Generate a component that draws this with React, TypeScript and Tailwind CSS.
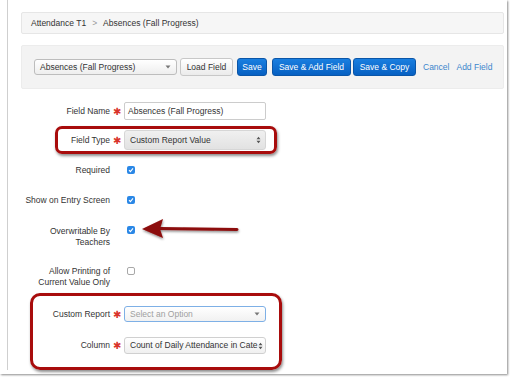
import React from "react";

const Star = () => (
  <div className="w-[14px] shrink-0 text-center text-[10px] leading-[11px] text-[#d9342b]">✱</div>
);

const Check = ({ on }: { on?: boolean }) =>
  on ? (
    <span className="flex h-[8px] w-[8px] items-center justify-center rounded-[2px] bg-[#2a87e6]">
      <svg width="6" height="6" viewBox="0 0 6 6">
        <path d="M1 3.2 L2.4 4.6 L5 1.4" stroke="white" strokeWidth="1.1" fill="none" />
      </svg>
    </span>
  ) : (
    <span className="block h-[8px] w-[8px] rounded-[2px] border border-[#a8a8a8] bg-white" />
  );

const UpDown = () => (
  <svg width="5" height="8" viewBox="0 0 5 8" className="shrink-0">
    <path d="M0.5 3.2 L2.5 0.8 L4.5 3.2 Z M0.5 4.8 L2.5 7.2 L4.5 4.8 Z" fill="#555" />
  </svg>
);

const Caret = () => (
  <svg width="6" height="4" viewBox="0 0 6 4" className="shrink-0">
    <path d="M0.5 0.5 L5.5 0.5 L3 3.5 Z" fill="#777" />
  </svg>
);

function Row({
  label,
  lines,
  star,
  children,
  className,
}: {
  label?: string;
  lines?: string[];
  star?: boolean;
  children: React.ReactNode;
  className: string;
}) {
  return (
    <div className={`flex ${className}`}>
      <div className="w-[103px] shrink-0 text-right leading-[11px]">
        {lines ? lines.map((l) => <div key={l}>{l}</div>) : label}
      </div>
      {star ? <Star /> : <div className="w-[14px] shrink-0" />}
      {children}
    </div>
  );
}

export default function App() {
  return (
    <div className="relative h-[380px] w-[511px] overflow-hidden bg-white font-['Liberation_Sans',Arial,sans-serif] text-[8.5px] text-[#333]">
      <div className="h-[374px] w-[507px] bg-white pl-[7px] shadow-[1px_1px_2px_rgba(0,0,0,0.45)]">
        <div className="h-[370px] border-l border-[#cfcfcf] pt-[12px] pr-[3px]">
          {/* breadcrumb */}
          <div className="ml-[13px] flex h-[22px] items-center gap-[6px] rounded-[2px] border border-[#e6e6e6] bg-[#f6f6f6] pl-[9px]">
            <span>Attendance T1</span>
            <span className="text-[#999]">&gt;</span>
            <span>Absences (Fall Progress)</span>
          </div>

          {/* toolbar */}
          <div className="ml-[13px] mt-[11px] flex h-[44px] items-center rounded-[2px] border border-[#ececec] bg-[#f3f3f3] pl-[12px]">
            <div className="flex h-[16px] w-[143px] items-center justify-between rounded-[3px] border border-[#bdbdbd] bg-gradient-to-b from-white to-[#eeeeee] pl-[5px] pr-[5px]">
              <span>Absences (Fall Progress)</span>
              <Caret />
            </div>
            <div className="ml-[3px] flex h-[18px] w-[53px] items-center justify-center rounded-[3px] border border-[#c8c8c8] bg-gradient-to-b from-white to-[#ebebeb]">
              Load Field
            </div>
            <div className="ml-[4px] flex h-[18px] w-[30px] items-center justify-center rounded-[3px] border border-[#0b56a8] bg-gradient-to-b from-[#1a7fe0] to-[#0760c2] text-white">
              Save
            </div>
            <div className="ml-[5px] flex h-[18px] w-[79px] items-center justify-center rounded-[3px] border border-[#0b56a8] bg-gradient-to-b from-[#1a7fe0] to-[#0760c2] text-white">
              Save &amp; Add Field
            </div>
            <div className="ml-[2px] flex h-[18px] w-[63px] items-center justify-center rounded-[3px] border border-[#0b56a8] bg-gradient-to-b from-[#1a7fe0] to-[#0760c2] text-white">
              Save &amp; Copy
            </div>
            <span className="ml-[7px] text-[#3b86cc]">Cancel</span>
            <span className="ml-[7px] text-[#3b86cc]">Add Field</span>
          </div>

          {/* form */}
          <div className="-ml-px flex flex-col">
            <Row label="Field Name" star className="mt-[13px] h-[18px] items-center">
              <div className="flex h-[18px] w-[142px] items-center rounded-[2px] border border-[#cccccc] bg-white pl-[3px]">
                Absences (Fall Progress)
              </div>
            </Row>
            <Row label="Field Type" star className="mt-[10px] h-[20px] items-center">
              <div className="flex h-[20px] w-[142px] items-center justify-between rounded-[3px] border border-[#d6d6d6] bg-gradient-to-b from-[#f0f0f0] to-[#e2e2e2] pl-[5px] pr-[4px]">
                <span>Custom Report Value</span>
                <UpDown />
              </div>
            </Row>
            <Row label="Required" className="mt-[15px] h-[11px] items-start">
              <div className="mt-[1px] pl-[3px]">
                <Check on />
              </div>
            </Row>
            <Row label="Show on Entry Screen" className="mt-[19px] h-[11px] items-start">
              <div className="mt-[1px] pl-[3px]">
                <Check on />
              </div>
            </Row>
            <Row lines={["Overwritable By", "Teachers"]} className="mt-[20px] items-start">
              <div className="pl-[3px]">
                <Check on />
              </div>
            </Row>
            <Row lines={["Allow Printing of", "Current Value Only"]} className="mt-[18px] items-start">
              <div className="mt-[1px] pl-[3px]">
                <Check />
              </div>
            </Row>
            <Row label="Custom Report" star className="mt-[18px] h-[16px] items-center">
              <div className="flex h-[16px] w-[142px] items-center justify-between rounded-[3px] border border-[#7eb0e6] bg-gradient-to-b from-white to-[#f1f1f1] pl-[5px] pr-[5px] text-[#a0a0a0]">
                <span>Select an Option</span>
                <Caret />
              </div>
            </Row>
            <Row label="Column" star className="mt-[15px] h-[17px] items-center">
              <div className="flex h-[17px] w-[142px] items-center justify-between rounded-[3px] border border-[#d0d0d0] bg-gradient-to-b from-white to-[#f0f0f0] pl-[5px] pr-[3px]">
                <span className="whitespace-nowrap">Count of Daily Attendance in Cate</span>
                <UpDown />
              </div>
            </Row>
          </div>
        </div>
      </div>

      {/* annotations */}
      <div className="absolute left-[55px] top-[126px] h-[28px] w-[222px] rounded-[7px] border-[3px] border-[#a80c0c] shadow-[1px_2px_3px_rgba(0,0,0,0.45)]" />
      <div className="absolute left-[30px] top-[293px] h-[77px] w-[252px] rounded-[10px] border-[3px] border-[#a80c0c] shadow-[1px_2px_3px_rgba(0,0,0,0.45)]" />
      <svg className="absolute left-[138px] top-[215px]" width="104" height="28" viewBox="0 0 104 28">
        <defs>
          <filter id="sh" x="-10%" y="-30%" width="130%" height="170%">
            <feDropShadow dx="0.5" dy="1.5" stdDeviation="1" floodColor="#000" floodOpacity="0.45" />
          </filter>
        </defs>
        <g filter="url(#sh)">
          <path d="M22 13.5 L99 14.5" stroke="#8c0a0a" strokeWidth="3" strokeLinecap="round" />
          <path d="M4 14 L25 4 L22 14 L25 23 Z" fill="#8c0a0a" />
        </g>
      </svg>
    </div>
  );
}
